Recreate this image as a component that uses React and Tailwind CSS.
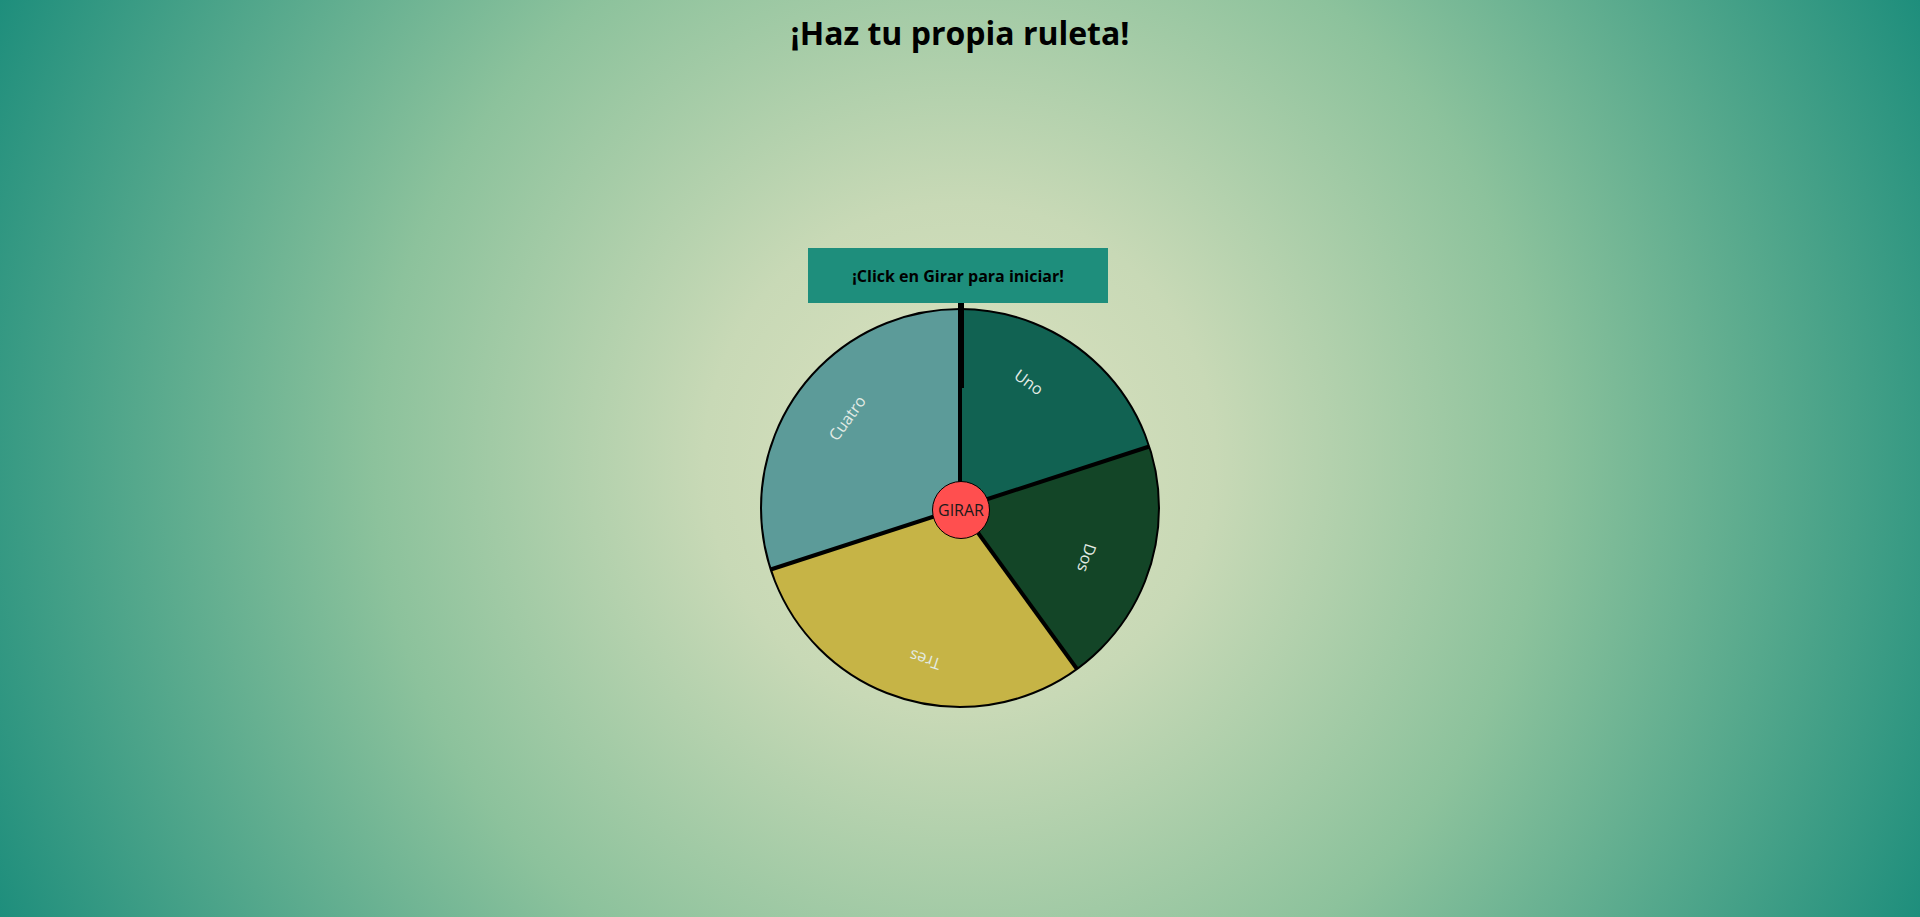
import React from 'react';

const R = 199;
const C = 200;

const point = (deg) => {
  const a = (deg * Math.PI) / 180;
  return [C + R * Math.sin(a), C - R * Math.cos(a)];
};

const segments = [
  { label: 'Uno', from: 0, to: 72, fill: '#116252', tx: 269, ty: 74 },
  { label: 'Dos', from: 72, to: 144, fill: '#134527', tx: 327, ty: 250 },
  { label: 'Tres', from: 144, to: 252, fill: '#c6b446', tx: 165, ty: 352 },
  { label: 'Cuatro', from: 252, to: 360, fill: '#5c9b99', tx: 87, ty: 110 },
];

const slicePath = (from, to) => {
  const [x1, y1] = point(from);
  const [x2, y2] = point(to);
  const large = to - from > 180 ? 1 : 0;
  return `M${C} ${C} L${x1} ${y1} A${R} ${R} 0 ${large} 1 ${x2} ${y2} Z`;
};

const Wheel = () => (
  <div className="relative mt-[5px] w-[400px] h-[400px]">
    <svg width="400" height="400" viewBox="0 0 400 400" className="block overflow-visible">
      {segments.map((s) => (
        <path key={s.label} d={slicePath(s.from, s.to)} fill={s.fill} />
      ))}
      {segments.map((s) => {
        const [x, y] = point(s.from);
        return <line key={s.label + '-l'} x1={C} y1={C} x2={x} y2={y} stroke="#000" strokeWidth="4" />;
      })}
      <circle cx={C} cy={C} r={R} fill="none" stroke="#000" strokeWidth="2" />
      {segments.map((s) => (
        <text
          key={s.label + '-t'}
          x={s.tx}
          y={s.ty}
          fill="#e4ece6"
          fontSize="16"
          fontFamily="'Open Sans', sans-serif"
          textAnchor="middle"
          dominantBaseline="central"
          transform={`rotate(${(s.from + s.to) / 2} ${s.tx} ${s.ty})`}
        >
          {s.label}
        </text>
      ))}
    </svg>
    <div className="absolute left-[198px] top-[-5px] w-[6px] h-[85px] bg-black" />
    <button className="absolute left-[172px] top-[173px] w-[58px] h-[58px] rounded-full bg-[#ff4f4f] border border-black text-[16px] text-[#1a1a1a] flex items-center justify-center">
      GIRAR
    </button>
  </div>
);

export default function App() {
  return (
    <div
      className="min-h-[917px] w-full flex flex-col items-center bg-[radial-gradient(circle_at_50%_50%,#dde2c0_0%,#c8d9b6_24%,#8cc29c_55%,#1e8e7c_100%)] font-['Open_Sans',sans-serif]"
    >
      <h1 className="pt-[11px] text-[32px] leading-[44px] font-bold text-black">¡Haz tu propia ruleta!</h1>
      <div className="mt-[193px] mr-[4px] w-[300px] h-[55px] bg-[#1e8e7c] flex items-center justify-center">
        <span className="text-[16px] font-bold text-black">¡Click en Girar para iniciar!</span>
      </div>
      <Wheel />
    </div>
  );
}
